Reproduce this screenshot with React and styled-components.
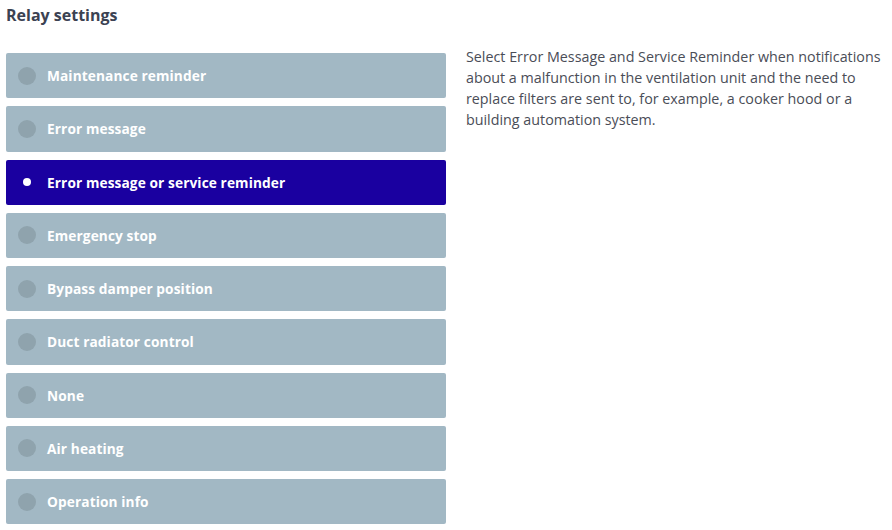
import React, { useState } from "react";
import styled, { createGlobalStyle } from "styled-components";

const GlobalStyle = createGlobalStyle`
  html, body {
    margin: 0;
    padding: 0;
    background: #ffffff;
    font-family: "Open Sans", Lato, sans-serif;
  }
`;

const Container = styled.div`
  padding: 4px 6px;
`;

const Title = styled.h2`
  margin: 0;
  font-size: 16px;
  font-weight: 700;
  color: #3b4252;
  line-height: 22px;
`;

const Content = styled.div`
  display: flex;
  align-items: flex-start;
  gap: 20px;
  margin-top: 27px;
`;

const List = styled.div`
  width: 440px;
  flex-shrink: 0;
  display: flex;
  flex-direction: column;
  gap: 8px;
`;

const Option = styled.button`
  display: flex;
  align-items: center;
  height: 45.25px;
  width: 100%;
  padding: 0 0 0 12px;
  border: none;
  border-radius: 2px;
  cursor: pointer;
  background-color: ${(props) => (props.$active ? "#1a00a0" : "#a2b8c4")};
  font-family: inherit;
  text-align: left;
`;

const Radio = styled.span`
  width: 18px;
  display: flex;
  justify-content: center;
  align-items: center;
  margin-right: 11px;

  &::before {
    content: "";
    display: block;
    width: ${(props) => (props.$active ? "8px" : "18px")};
    height: ${(props) => (props.$active ? "8px" : "18px")};
    border-radius: 50%;
    background-color: ${(props) => (props.$active ? "#ffffff" : "#8fa3ad")};
  }
`;

const Label = styled.span`
  color: #ffffff;
  font-size: 13.7px;
  font-weight: 700;
  letter-spacing: 0.1px;
`;

const Help = styled.p`
  margin: -7px 0 0;
  font-size: 14.3px;
  line-height: 21px;
  color: #4a4d57;
  max-width: 422px;
`;

const options = [
  "Maintenance reminder",
  "Error message",
  "Error message or service reminder",
  "Emergency stop",
  "Bypass damper position",
  "Duct radiator control",
  "None",
  "Air heating",
  "Operation info",
];

const App = () => {
  const [selected, setSelected] = useState(2);

  return (
    <Container>
      <GlobalStyle />
      <Title>Relay settings</Title>
      <Content>
        <List>
          {options.map((label, i) => (
            <Option
              key={label}
              $active={selected === i}
              onClick={() => setSelected(i)}
            >
              <Radio $active={selected === i} />
              <Label>{label}</Label>
            </Option>
          ))}
        </List>
        <Help>
          Select Error Message and Service Reminder when notifications about a
          malfunction in the ventilation unit and the need to replace filters
          are sent to, for example, a cooker hood or a building automation
          system.
        </Help>
      </Content>
    </Container>
  );
};

export default App;
